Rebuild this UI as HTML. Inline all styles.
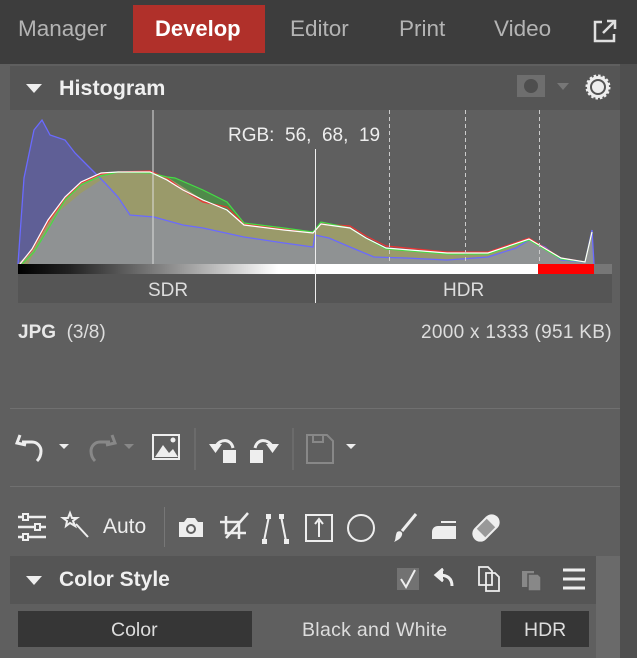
<!DOCTYPE html>
<html><head><meta charset="utf-8"><style>
*{margin:0;padding:0;box-sizing:border-box}
body{width:637px;height:658px;background:#5f5f5f;overflow:hidden;position:relative;font-family:"Liberation Sans",sans-serif;color:#e8e8e8}
.a{position:absolute}
.nav{font-size:22.5px;color:#b4b4b4;top:16px}
</style></head><body>
<div class="a" style="left:0;top:0;width:637px;height:64px;background:#3d3d3d"></div>
<div class="a nav" style="left:18px">Manager</div>
<div class="a" style="left:133px;top:5px;width:132px;height:48px;background:#b0302a"></div>
<div class="a nav" style="left:155px;color:#fff;font-weight:bold;font-size:22px">Develop</div>
<div class="a nav" style="left:290px">Editor</div>
<div class="a nav" style="left:399px">Print</div>
<div class="a nav" style="left:494px">Video</div>
<svg class="a" style="left:592px;top:18px" width="28" height="26" viewBox="0 0 28 26" fill="none" stroke="#e0e0e0" stroke-width="2.5"><path d="M10 4H3v19h19v-7"/><path d="M11 15L23 3M15 3h8v8"/></svg>
<div class="a" style="left:620px;top:64px;width:17px;height:594px;background:#4f4f4f"></div>
<div class="a" style="left:10px;top:66px;width:610px;height:44px;background:#555"></div>
<div class="a" style="left:26px;top:84px;border-left:8px solid transparent;border-right:8px solid transparent;border-top:9px solid #eee"></div>
<div class="a" style="left:59px;top:76px;font-size:21.5px;font-weight:bold;color:#f0f0f0">Histogram</div>
<div class="a" style="left:517px;top:75px;width:28px;height:22px;background:#6e6e6e"></div>
<div class="a" style="left:524px;top:79px;width:14px;height:14px;border-radius:50%;background:#4e4e4e"></div>
<div class="a" style="left:557px;top:83px;border-left:6px solid transparent;border-right:6px solid transparent;border-top:7px solid #777"></div>
<svg class="a" style="left:584px;top:73px" width="28" height="28" viewBox="0 0 28 28"><circle cx="14" cy="14" r="11" fill="#eee" stroke="#eee" stroke-width="3" stroke-dasharray="2.4 1.9"/><circle cx="14" cy="14" r="7" fill="#eee" stroke="#555" stroke-width="2"/></svg>
<svg class="a" style="left:0;top:0" width="637" height="310">
<polygon fill="#5f5fa8" fill-opacity=".75" points="18,264 24,178 34,130 42,120 50,135 65,140 75,153 85,163 95,173 105,183 118,197 130,215 154,217 183,225 203,228 244,237 284,243 313,247 315,235 329,238 350,247 374,257 406,258 447,260 488,257 516,248 529,240 545,247 561,260 585,262 592,230 594,264"/>
<polygon fill="#9a9a6a" points="18,264 32,250 48,220 65,197 81,182 101,173 118,172 150,172 167,177 175,178 203,190 227,202 244,223 284,228 313,232 321,223 350,227 366,238 386,248 447,253 488,253 529,239 561,258 585,262 592,232 594,264"/>
<polygon fill="#4f8a4a" points="167,177 175,178 203,190 227,202 244,223 227,210 203,200 183,187"/>
<polygon fill="#8f9293" points="28,264 40,243 57,213 81,193 101,180 105,183 118,197 130,215 154,217 183,225 203,228 244,237 284,243 313,247 315,235 329,238 350,247 374,257 406,258 447,260 488,257 516,248 529,240 545,247 561,260 585,262 592,230 594,264"/>
<polyline fill="none" stroke="#6a6aff" stroke-width="1.3" points="18,264 24,178 34,130 42,120 50,135 65,140 75,153 85,163 95,173 105,183 118,197 130,215 154,217 183,225 203,228 244,237 284,243 313,247 315,235 329,238 350,247 374,257 406,258 447,260 488,257 516,248 529,240 545,247 561,260 585,262 592,230 594,264"/>
<polyline fill="none" stroke="#e33" stroke-width="1.2" points="20,264 32,250 48,222 65,198 81,183 101,174 118,172 150,171 167,178 183,190 203,202 227,207 244,224 284,229 313,233 321,224 350,226 366,236 386,246 447,252 488,252 529,238 561,258 585,262 592,232"/>
<polyline fill="none" stroke="#4d4" stroke-width="1.2" points="22,264 34,252 50,226 65,200 81,185 101,176 118,172 150,173 167,177 175,178 203,190 227,202 244,223 284,228 313,232 321,222 350,228 366,238 386,249 447,254 488,254 529,240 561,259 585,262 592,232"/>
<polyline fill="none" stroke="#fff" stroke-width="1.2" points="20,264 32,249 48,220 65,197 81,182 101,173 118,172 150,172 167,180 183,190 203,200 227,210 244,225 284,230 313,233 321,224 350,228 366,238 386,248 447,253 488,253 529,239 561,258 585,262 592,232"/>
<line x1="153" y1="110" x2="153" y2="264" stroke="#ddd"/>
<g stroke="#ccc" stroke-dasharray="4 3"><line x1="389.5" y1="110" x2="389.5" y2="264"/><line x1="465.5" y1="110" x2="465.5" y2="264"/><line x1="539.5" y1="110" x2="539.5" y2="264"/></g>
<defs><linearGradient id="g"><stop offset="0" stop-color="#000"/><stop offset=".1" stop-color="#222"/><stop offset=".5" stop-color="#fff"/><stop offset="1" stop-color="#fff"/></linearGradient></defs>
<rect x="18" y="264" width="520" height="10" fill="url(#g)"/>
<rect x="538" y="264" width="56" height="10" fill="#f00"/>
<rect x="594" y="264" width="18" height="10" fill="#777"/>
<rect x="18" y="274" width="594" height="29" fill="#555"/>
<line x1="315.5" y1="149" x2="315.5" y2="303" stroke="#eee"/>
</svg>
<div class="a" style="left:228px;top:125px;font-size:19px;color:#eee">RGB:&nbsp; 56,&nbsp; 68,&nbsp; 19</div>
<div class="a" style="left:148px;top:280px;font-size:19px;color:#ddd">SDR</div>
<div class="a" style="left:443px;top:280px;font-size:19px;color:#ddd">HDR</div>
<div class="a" style="left:18px;top:322px;font-size:19px"><b>JPG</b>&nbsp;&nbsp;<span style="color:#ddd">(3/8)</span></div>
<div class="a" style="left:421px;top:322px;font-size:19px;color:#ddd;letter-spacing:.3px">2000 x 1333 (951 KB)</div>
<div class="a" style="left:10px;top:408px;width:610px;height:1px;background:#707070"></div>
<div class="a" style="left:10px;top:486px;width:610px;height:1px;background:#707070"></div>
<svg class="a" style="left:0;top:420px" width="380" height="60" fill="none" stroke="#eee" stroke-width="3">
<path d="M22 22h10a9 9 0 0 1 9 9c0 5-2 8-4 10M20 15l-3 8 9 2"/>
<path d="M59 24l5 5 5-5z" fill="#eee" stroke="none"/>
<path d="M110 22h-10a9 9 0 0 0-9 9c0 5 2 8 4 10M112 15l3 8-9 2" stroke="#888"/>
<path d="M124 24l5 5 5-5z" fill="#888" stroke="none"/>
<rect x="153" y="15" width="26" height="24" stroke-width="2"/><path d="M155 37l8-12 6 8 4-4 5 8z" fill="#eee" stroke="none"/><circle cx="173" cy="20" r="2.5" fill="#eee" stroke="none"/>
<line x1="195" y1="8" x2="195" y2="50" stroke="#777" stroke-width="1"/>
<path d="M233 28C231 19 221 18 216 26" stroke-width="3"/><path d="M209 24h13l-6.5 9z" fill="#eee" stroke="none"/><rect x="223" y="30" width="13" height="13" fill="#eee" stroke="none"/>
<path d="M255 28C257 19 267 18 272 26" stroke-width="3"/><path d="M279 24h-13l6.5 9z" fill="#eee" stroke="none"/><rect x="250" y="30" width="13" height="13" fill="#eee" stroke="none"/>
<line x1="293" y1="8" x2="293" y2="50" stroke="#777" stroke-width="1"/>
<path d="M307 15h20l6 6v22h-26z" stroke="#888" stroke-width="2"/><rect x="313" y="15" width="10" height="7" stroke="#888" stroke-width="2"/>
<path d="M346 24l5 5 5-5z" fill="#eee" stroke="none"/>
</svg>
<svg class="a" style="left:0;top:505px" width="520" height="45" fill="none" stroke="#eee" stroke-width="2.5">
<path d="M18 12h28M18 22h28M18 32h28"/><rect x="23" y="9" width="5" height="6" fill="#5f5f5f" stroke-width="2"/><rect x="35" y="19" width="5" height="6" fill="#5f5f5f" stroke-width="2"/><rect x="23" y="29" width="5" height="6" fill="#5f5f5f" stroke-width="2"/>
<path d="M70 8l2 5 5 0-4 3 2 5-5-3-4 3 1-5-4-3h5zM76 19l12 13" stroke-width="2"/>
<path d="M179 17h5l3-4h8l3 4h5v15h-24z" fill="#eee" stroke="none"/><circle cx="191" cy="24" r="5" fill="#5f5f5f" stroke="none"/><circle cx="191" cy="24" r="3" fill="#eee" stroke="none"/>
<path d="M226 11v17h20M220 17h19v17M226 33L248 8"/>
<path d="M264 36l5-25M286 36l-5-25" stroke-width="2"/><rect x="262" y="34" width="5" height="5" fill="#eee" stroke="none"/><rect x="266" y="9" width="5" height="5" fill="#eee" stroke="none"/><rect x="284" y="34" width="5" height="5" fill="#eee" stroke="none"/><rect x="279" y="9" width="5" height="5" fill="#eee" stroke="none"/>
<rect x="306" y="10" width="26" height="26" stroke-width="2"/><path d="M319 32v-16M315 19l4-5 4 5" stroke-width="2"/>
<circle cx="361" cy="23" r="13" stroke-width="2"/>
<path d="M416 9l-14 17" stroke-width="3"/><path d="M397 27c3-2 6 0 5 3-1 4-6 6-8 7 2-2 1-6 3-10z" fill="#eee" stroke="none"/>
<path d="M432 34v-7c0-4 3-6 6-6h18v13z" fill="#eee" stroke="none"/><path d="M441 17h15" stroke-width="2"/>
<g transform="rotate(-45 486 23)"><rect x="470" y="15" width="32" height="16" rx="8" fill="#eee" stroke="none"/><rect x="479" y="17" width="14" height="12" fill="#999" stroke="none"/></g>
</svg>
<div class="a" style="left:103px;top:515px;font-size:21px;color:#eee">Auto</div>
<div class="a" style="left:164px;top:507px;width:1px;height:40px;background:#777"></div>
<div class="a" style="left:596px;top:556px;width:24px;height:102px;background:#6a6a6a"></div>
<div class="a" style="left:10px;top:556px;width:586px;height:48px;background:#555"></div>
<div class="a" style="left:26px;top:576px;border-left:8px solid transparent;border-right:8px solid transparent;border-top:9px solid #eee"></div>
<div class="a" style="left:59px;top:568px;font-size:21px;font-weight:bold;color:#f0f0f0">Color Style</div>
<div class="a" style="left:397px;top:568px;width:22px;height:22px;background:#727272"></div>
<svg class="a" style="left:395px;top:562px" width="200" height="34" fill="none" stroke="#eee" stroke-width="2.5">
<path d="M6 17l5 8 9-17" stroke-width="2"/>
<path d="M57 24c0-8-5-11-13-11M48 7l-7 6 7 6" stroke-width="3"/><path d="M41 13l7-7v14z" fill="#eee" stroke="none"/>
<path d="M84 5h9l4 4v14h-13zM91 11h9l4 4v14h-13z" fill="#555" stroke-width="1.8"/>
<path d="M127 9h12v16h-12z" fill="#888" stroke="none"/><path d="M133 12h10l3 3v14h-13z" fill="#888" stroke="#555" stroke-width="1.5"/>
<path d="M168 8h22M168 17h22M168 26h22" stroke-width="3"/>
</svg>
<div class="a" style="left:18px;top:611px;width:234px;height:36px;background:#363636"></div>
<div class="a" style="left:111px;top:619px;font-size:19.5px;color:#ddd">Color</div>
<div class="a" style="left:302px;top:619px;font-size:19.5px;color:#ddd;letter-spacing:.3px">Black and White</div>
<div class="a" style="left:501px;top:611px;width:88px;height:36px;background:#363636"></div>
<div class="a" style="left:524px;top:619px;font-size:19.5px;color:#ddd">HDR</div>
</body></html>
